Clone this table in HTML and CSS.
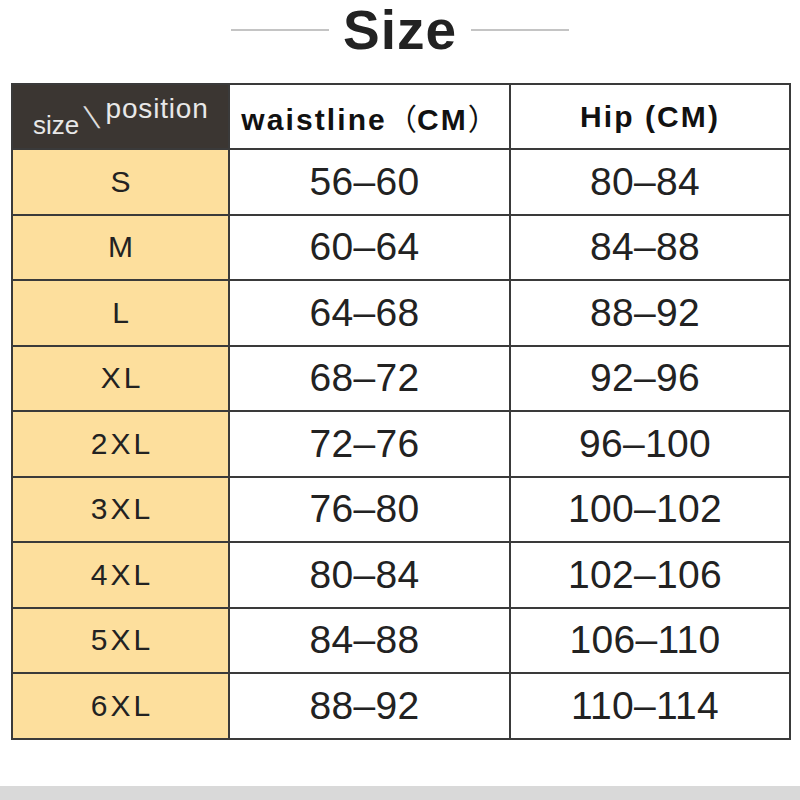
FILE: index.html
```html
<!DOCTYPE html>
<html>
<head>
<meta charset="utf-8">
<link rel="stylesheet" href="styles.css">
</head>
<body>
<div class="page">
  <div class="title-row">
    <span class="title-line"></span>
    <h1 class="title">Size</h1>
    <span class="title-line"></span>
  </div>
  <div class="table-wrap">
    <table class="chart">
      <colgroup>
        <col class="c1"><col class="c2"><col class="c3">
      </colgroup>
      <thead>
        <tr class="head-row">
          <th class="corner"><span class="w-size">size</span><span class="w-slash">\</span><span class="w-pos">position</span></th>
          <th class="head">waistline<span class="cjk">（</span>CM<span class="cjk">）</span></th>
          <th class="head">Hip (CM)</th>
        </tr>
      </thead>
      <tbody>
        <tr><td class="sz">S</td><td class="num">56–60</td><td class="num">80–84</td></tr>
        <tr><td class="sz">M</td><td class="num">60–64</td><td class="num">84–88</td></tr>
        <tr><td class="sz">L</td><td class="num">64–68</td><td class="num">88–92</td></tr>
        <tr><td class="sz">XL</td><td class="num">68–72</td><td class="num">92–96</td></tr>
        <tr><td class="sz">2XL</td><td class="num">72–76</td><td class="num">96–100</td></tr>
        <tr><td class="sz">3XL</td><td class="num">76–80</td><td class="num">100–102</td></tr>
        <tr><td class="sz">4XL</td><td class="num">80–84</td><td class="num">102–106</td></tr>
        <tr><td class="sz">5XL</td><td class="num">84–88</td><td class="num">106–110</td></tr>
        <tr><td class="sz">6XL</td><td class="num">88–92</td><td class="num">110–114</td></tr>
      </tbody>
    </table>
  </div>
  <div class="bottom-bar"></div>
</div>
</body>
</html>
```

FILE: styles.css
```css
html, body {
  margin: 0;
  padding: 0;
  background: #ffffff;
}

.page {
  width: 800px;
  height: 800px;
  display: flex;
  flex-direction: column;
  font-family: "Liberation Sans", Arial, sans-serif;
  color: #111;
}

.title-row {
  height: 60px;
  display: flex;
  align-items: center;
  justify-content: center;
  gap: 14px;
}

.title-line {
  width: 98px;
  height: 2px;
  background: #c4c4c4;
}

.title {
  margin: 0;
  font-size: 55px;
  font-weight: 700;
  color: #222;
  line-height: 60px;
  letter-spacing: 1px;
}

.table-wrap {
  padding: 23px 11px 0 11px;
}

.chart {
  border-collapse: collapse;
  width: 778px;
  table-layout: fixed;
}

.c1 { width: 217px; }
.c2 { width: 281px; }
.c3 { width: 280px; }

.chart th,
.chart td {
  border: 2px solid #3a3a3a;
  padding: 0;
  text-align: center;
  vertical-align: middle;
}

.head-row { height: 65px; }
.chart tbody tr { height: 65.5px; }

.corner {
  background: #3b3632;
  color: #e8e8e8;
  font-weight: 400;
  text-align: left !important;
  padding-left: 20px !important;
  white-space: nowrap;
}

.w-size {
  font-size: 26px;
  vertical-align: -10px;
}

.w-slash {
  display: inline-block;
  font-size: 30px;
  font-weight: 400;
  color: #dcdcdc;
  margin: 0 9px 0 9px;
  transform: skewX(22deg);
  vertical-align: -4px;
}

.w-pos {
  font-size: 28px;
  letter-spacing: 0.8px;
  vertical-align: 6px;
}

.head {
  background: #fff;
  font-size: 30px;
  font-weight: 700;
  letter-spacing: 2.1px;
  color: #111;
  white-space: nowrap;
}

.cjk {
  font-family: "Noto Sans CJK SC", sans-serif;
  font-weight: 400;
  letter-spacing: 0;
}

.sz {
  background: #fddf9d;
  font-size: 30px;
  letter-spacing: 3px;
  text-indent: 3px;
  color: #222;
}

.num {
  background: #fff;
  font-size: 39px;
  letter-spacing: 0.3px;
  color: #222;
  padding-right: 10px !important;
}

.bottom-bar {
  margin-top: auto;
  height: 14px;
  background: #d9d9d9;
}
```
